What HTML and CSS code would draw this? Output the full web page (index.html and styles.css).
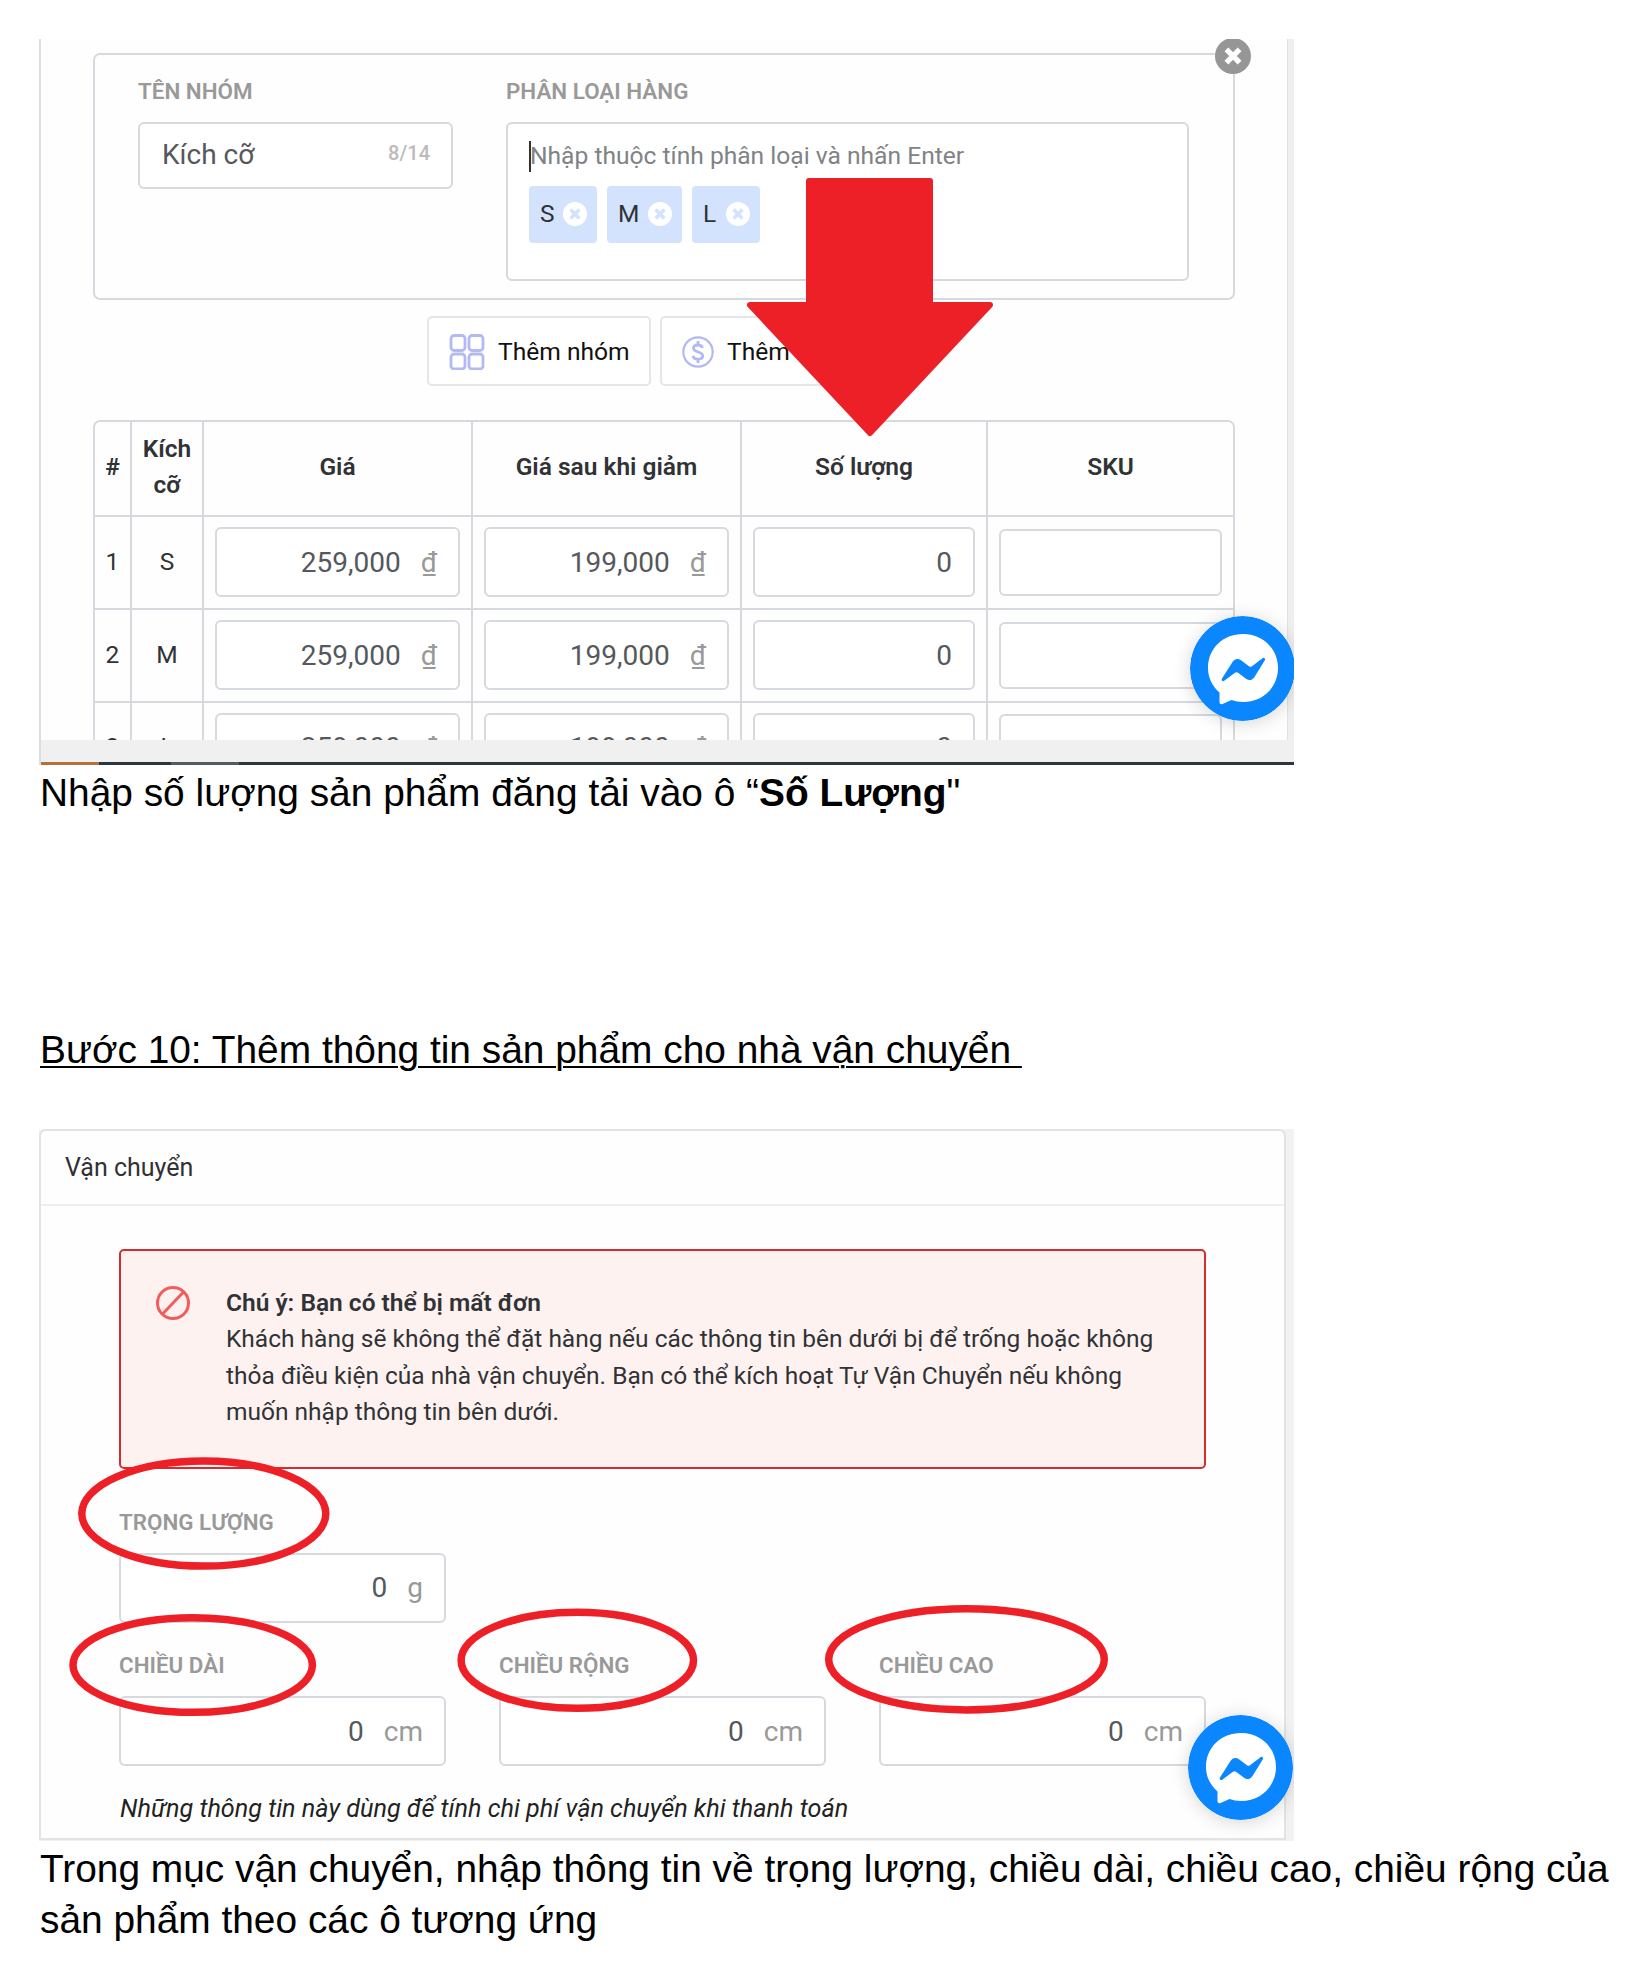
FILE: index.html
```html
<!DOCTYPE html>
<html lang="vi">
<head>
<meta charset="utf-8">
<title>Hướng dẫn đăng sản phẩm</title>
<link rel="stylesheet" href="styles.css">
</head>
<body>
<svg width="0" height="0" class="defs">
  <symbol id="messenger" viewBox="0 0 105 105">
    <circle cx="52.5" cy="52.5" r="52.5" fill="#0a87ff"/>
    <path d="M53 18C33 18 18 32.500 18 52c0 10 4.500 18.500 11.500 24.500V86c0 1.800 1.500 2.700 3 2l9-4c3.500 1.200 7.500 2 11.500 2 20 0 35-15 35-34S73 18 53 18z" fill="#fff"/>
    <path d="M32 62.500L42.500 46c2.200-3.500 5.500-4 8.500-1.800l8 6c1 .7 2 .7 3 0l10.500-8c1.600-1.200 3.300.6 2.200 2.300L64.500 61c-2.200 3.500-5.500 4-8.500 1.800l-8-6c-1-.7-2-.7-3 0l-10.800 8c-1.600 1.200-3.300-.6-2.200-2.300z" fill="#0a87ff"/>
  </symbol>
  <symbol id="cross" viewBox="0 0 24 24">
    <circle cx="12" cy="12" r="12" fill="currentColor"/>
    <path d="M7.600 7.600l8.800 8.800M16.400 7.600l-8.800 8.800" class="cross-mark"/>
  </symbol>
</svg>

<main class="doc">
  <figure class="shot shot-variants">
    <section class="group">
      <div class="field field-name">
        <span class="label">TÊN NHÓM</span>
        <div class="box name-box"><span>Kích cỡ</span><small>8/14</small></div>
      </div>
      <div class="field field-options">
        <span class="label">PHÂN LOẠI HÀNG</span>
        <div class="box option-box">
          <p class="placeholder">Nhập thuộc tính phân loại và nhấn Enter</p>
          <div class="chips">
            <span class="chip">S<svg><use href="#cross"/></svg></span>
            <span class="chip chip-m">M<svg><use href="#cross"/></svg></span>
            <span class="chip">L<svg><use href="#cross"/></svg></span>
          </div>
        </div>
      </div>
      <svg class="close"><use href="#cross"/></svg>
    </section>

    <div class="actions">
      <div class="button">
        <svg width="36" height="36" viewBox="0 0 36 36" fill="none" stroke="#b3b9f3" stroke-width="2.800"><rect x="2" y="1.500" width="14" height="15" rx="3"/><rect x="20" y="1.500" width="14" height="15" rx="3"/><rect x="2" y="20" width="14" height="15" rx="3"/><rect x="20" y="20" width="14" height="15" rx="3"/></svg>
        <span>Thêm nhóm</span>
      </div>
      <div class="button button-price">
        <svg width="32" height="32" viewBox="0 0 32 32" fill="none" stroke="#b3b9f3" stroke-width="2.200"><circle cx="16" cy="16" r="14.700"/><path stroke-width="2.800" d="M20.500 12c-.5-2-2-3-4.500-3s-4.500 1.200-4.500 3.300c0 4.700 9.200 2.700 9.200 7.400 0 2.200-2 3.500-4.700 3.500-2.800 0-4.600-1.200-4.900-3.400M16 5v4M16 23v4"/></svg>
        <span>Thêm</span>
      </div>
    </div>

    <div class="table">
      <div class="row head"><span>#</span><span>Kích cỡ</span><span>Giá</span><span>Giá sau khi giảm</span><span>Số lượng</span><span>SKU</span></div>
      <div class="row"><span>1</span><span>S</span><div><p class="box num">259,000<i>₫</i></p></div><div><p class="box num">199,000<i>₫</i></p></div><div><p class="box num">0</p></div><div><p class="box sku"></p></div></div>
      <div class="row"><span>2</span><span>M</span><div><p class="box num">259,000<i>₫</i></p></div><div><p class="box num">199,000<i>₫</i></p></div><div><p class="box num">0</p></div><div><p class="box sku"></p></div></div>
      <div class="row"><span>3</span><span>L</span><div><p class="box num">259,000<i>₫</i></p></div><div><p class="box num">199,000<i>₫</i></p></div><div><p class="box num">0</p></div><div><p class="box sku"></p></div></div>
    </div>

    <svg class="messenger messenger-a"><use href="#messenger"/></svg>
    <div class="taskbar"></div>
    <svg class="arrow" width="250" height="260" viewBox="0 0 250 260"><path d="M64 3h121v124h60L125 255 5 127h59z" fill="#ed2028" stroke="#ed2028" stroke-width="6" stroke-linejoin="round"/></svg>
  </figure>

  <p class="caption">Nhập số lượng sản phẩm đăng tải vào ô “<b>Số Lượng</b>"</p>

  <h1 class="step">Bước 10: Thêm thông tin sản phẩm cho nhà vận chuyển&nbsp;</h1>

  <figure class="shot shot-shipping">
    <section class="panel">
      <h2>Vận chuyển</h2>
      <div class="panel-body">
        <div class="alert">
          <svg width="36" height="36" viewBox="0 0 36 36" fill="none" stroke="#f45b5b" stroke-width="3"><circle cx="18" cy="18" r="15.500"/><path d="M7.500 29L28.500 7"/></svg>
          <div>
            <b>Chú ý: Bạn có thể bị mất đơn</b>
            <p>Khách hàng sẽ không thể đặt hàng nếu các thông tin bên dưới bị để trống hoặc không<br>thỏa điều kiện của nhà vận chuyển. Bạn có thể kích hoạt Tự Vận Chuyển nếu không<br>muốn nhập thông tin bên dưới.</p>
          </div>
        </div>
        <div class="measures">
          <div class="measure weight"><span class="label">TRỌNG LƯỢNG</span><p class="box num">0<i>g</i></p></div>
          <div class="measure"><span class="label">CHIỀU DÀI</span><p class="box num">0<i>cm</i></p></div>
          <div class="measure"><span class="label">CHIỀU RỘNG</span><p class="box num">0<i>cm</i></p></div>
          <div class="measure"><span class="label">CHIỀU CAO</span><p class="box num">0<i>cm</i></p></div>
        </div>
        <p class="hint">Những thông tin này dùng để tính chi phí vận chuyển khi thanh toán</p>
      </div>
    </section>
    <svg class="messenger messenger-b"><use href="#messenger"/></svg>
    <svg class="marks" width="1255" height="712" viewBox="39 1129 1255 712" fill="none" stroke="#ed2028" stroke-width="7.500">
      <ellipse cx="203.800" cy="1513.600" rx="122" ry="52.500"/>
      <ellipse cx="192.700" cy="1665" rx="119.700" ry="47.300"/>
      <ellipse cx="577.300" cy="1660.300" rx="116.200" ry="48"/>
      <ellipse cx="966.500" cy="1659.300" rx="137.800" ry="50.600"/>
    </svg>
  </figure>

  <p class="caption">Trong mục vận chuyển, nhập thông tin về trọng lượng, chiều dài, chiều cao, chiều rộng của<br>sản phẩm theo các ô tương ứng</p>
</main>
</body>
</html>
```
FILE: styles.css
```css
* { box-sizing: border-box; margin: 0; padding: 0; }
body { background: #fff; font-family: Roboto, sans-serif; color: #303236; }
svg { display: block; flex: none; }
.defs { position: absolute; }
.cross-mark { fill: none; stroke: var(--mark, #d3e3fe); stroke-width: 3.6; }

.doc { padding: 39px 0 0 39px; }
.shot { position: relative; width: 1255px; overflow: hidden; background: #fefefe; }
.caption, .step { padding-left: 1px; font: 400 38.87px/51.5px "Liberation Sans", sans-serif; color: #000; white-space: nowrap; }
.caption { padding-top: 2px; }
.step { margin: 205px 0 53.5px; text-decoration: underline; text-decoration-thickness: 2px; text-underline-offset: 3px; }

.label { display: block; font-size: 22.4px; line-height: 26px; font-weight: 600; color: #999; white-space: nowrap; }
.box { border: 2px solid #d6d9dd; border-radius: 6px; background: #fff; }
.num { display: flex; align-items: center; justify-content: flex-end; height: 70px; padding: 0 21px; font-size: 28px; color: #55585c; }
.num i { margin-left: 20px; font-style: normal; color: #999; }

/* Variant editor */
.shot-variants { height: 726px; padding: 14px 0 0 54px; border-left: 2px solid #dcdee0; }
.shot-variants::after { content: ""; position: absolute; top: 0; right: 0; bottom: 0; width: 6px; background: #efefef; border-left: 1px solid #e2e2e2; }
.group { position: relative; display: flex; gap: 53px; width: 1142px; height: 247px; padding: 23px 0 0 43px; margin-left: -2px; border: 2px solid #d6d9dd; border-radius: 7px; }
.field-name { width: 315px; }
.field-options { width: 683px; }
.label + .box { margin-top: 18px; }
.name-box { display: flex; justify-content: space-between; align-items: center; height: 67px; padding: 0 21px 2px 22px; font-size: 28px; color: #55585c; }
.name-box small { padding-bottom: 3px; font-size: 20px; font-weight: 500; color: #bbb; }
.option-box { height: 159px; padding: 17px 21px; }
.placeholder { height: 31px; border-left: 2px solid #333; font-size: 24.6px; line-height: 30px; letter-spacing: 0; text-indent: -1px; color: #808285; white-space: nowrap; }
.chips { display: flex; gap: 10px; margin-top: 14px; }
.chip { display: flex; align-items: center; justify-content: space-between; width: 68px; height: 57px; padding: 0 10px 2px 11px; border-radius: 4px; background: #d3e3fe; font-size: 24.5px; }
.chip-m { width: 75px; }
.chip svg { width: 24px; height: 24px; color: #fff; }
.close { position: absolute; top: -17px; right: -18px; width: 36px; height: 36px; color: #969696; --mark: #fff; }

.actions { display: flex; gap: 9px; margin: 16px 0 34px 332px; }
.button { display: flex; align-items: center; gap: 13px; width: 224px; height: 70px; padding-left: 20px; border: 2px solid #e5e6e8; border-radius: 5px; background: #fff; font-size: 24.6px; color: #111; white-space: nowrap; }
.button-price { width: 215px; }
.button svg { position: relative; top: 1px; }

.table { width: 1142px; margin-left: -2px; border: 2px solid #d6d9dd; border-radius: 7px; }
.row { display: grid; grid-template-columns: 37px 72px 269px 269px 246px 1fr; height: 92.8px; border-bottom: 2px solid #d6d9dd; }
.row > * { border-right: 2px solid #d6d9dd; }
.row > :last-child { border-right: 0; }
.row > span { display: flex; align-items: center; justify-content: center; padding-bottom: 1px; font-size: 24.5px; line-height: 36px; text-align: center; }
.row > div { display: flex; flex-direction: column; justify-content: center; padding: 0 11px; }
.head { height: 95px; }
.head > span { font-weight: 600; padding: 0 4px 3px; }
.sku { height: 67px; }

.taskbar { position: absolute; z-index: 1; left: -2px; right: 0; top: 701px; height: 25px; }
.taskbar::before { content: ""; display: block; height: 22px; background: #f0f0f0; }
.taskbar::after { content: ""; display: block; height: 3px; background: linear-gradient(90deg, #b5713c 60px, #2b373e 60px 132px, #545c61 132px 200px, #2b373e 200px); }
.arrow { position: absolute; z-index: 3; left: 703.5px; top: 139px; }
.messenger { position: absolute; z-index: 2; width: 105px; height: 105px; border-radius: 50%; box-shadow: 0 2px 18px rgba(0, 0, 0, .16); }
.messenger-a { left: 1149px; top: 577px; }
.messenger-b { left: 1148.5px; top: 586px; }

/* Shipping panel */
.shot-shipping { height: 712px; background: #f2f2f2; }
.panel { width: 1247px; height: 711px; border: 2px solid #e3e3e3; border-radius: 7px 7px 0 0; background: #fefefe; }
.panel h2 { height: 75px; padding: 0 24px; border-bottom: 2px solid #eee; font-size: 25px; line-height: 73px; font-weight: 400; }
.panel-body { padding: 43px 78px 0; }
.alert { display: flex; gap: 35px; width: 1087px; height: 220px; padding: 34px 34px 0; border: 2px solid #d22d30; border-radius: 5px; background: #fef2f0; font-size: 24.5px; line-height: 36.5px; white-space: nowrap; }
.alert svg { margin-top: 0; }
.alert b { font-weight: 600; }
.measures { display: grid; grid-template-columns: repeat(3, 327px); column-gap: 53px; row-gap: 29.5px; margin-top: 40px; }
.weight { grid-column: 1 / -1; width: 327px; }
.hint { margin: 28px 0 0 1px; font-size: 25.2px; line-height: 30px; font-style: italic; color: #222; white-space: nowrap; }
.marks { position: absolute; z-index: 1; left: 0; top: 0; }
```
